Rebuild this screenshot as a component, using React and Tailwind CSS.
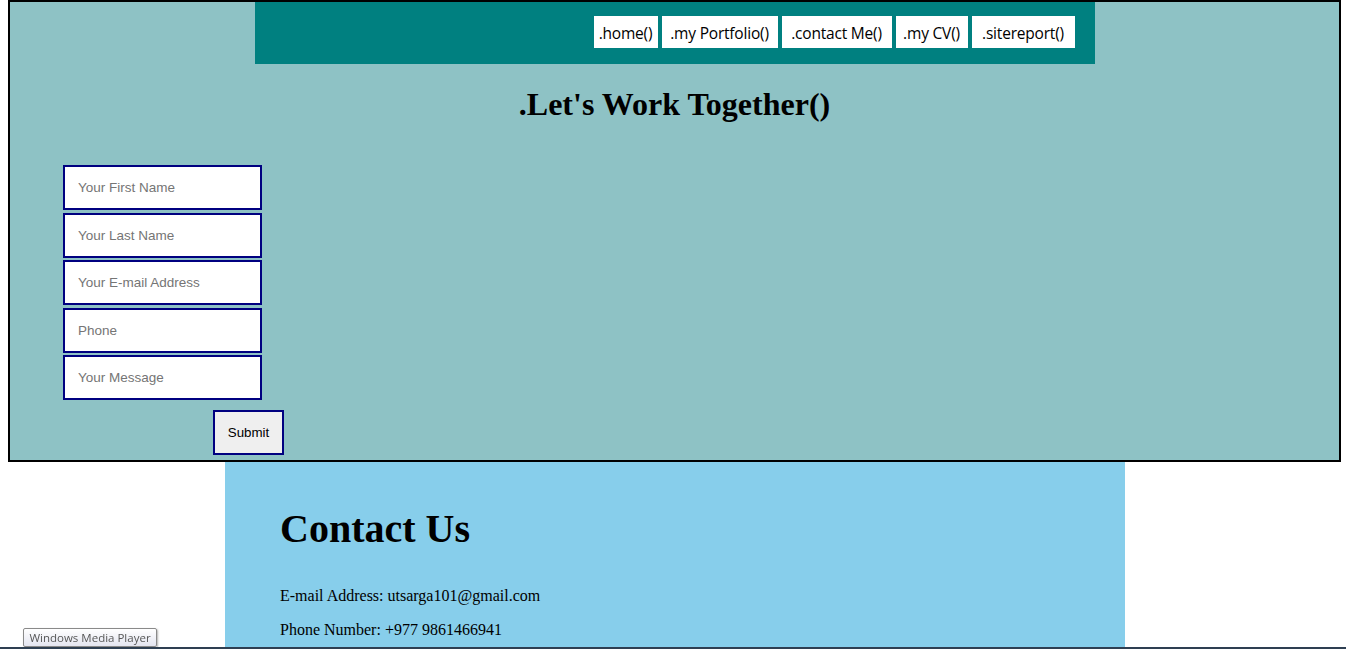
const navItems = [
  { label: '.home()', w: 'w-[64px]' },
  { label: '.my Portfolio()', w: 'w-[116px]' },
  { label: '.contact Me()', w: 'w-[110px]' },
  { label: '.my CV()', w: 'w-[72px]' },
  { label: '.sitereport()', w: 'w-[103px]' },
];

const fields = ['Your First Name', 'Your Last Name', 'Your E-mail Address', 'Phone', 'Your Message'];

function NavBar() {
  return (
    <nav className="mx-auto w-[840px] h-[62px] bg-[#008080] flex justify-end items-start pt-[14px] pr-[20px] gap-[4px]">
      {navItems.map((item) => (
        <a
          key={item.label}
          href="#"
          className={`${item.w} h-[32px] pt-[3px] bg-white text-black flex items-center justify-center text-[15.5px] whitespace-nowrap tracking-[-0.2px] font-['Comic_Sans_MS','Open_Sans',sans-serif]`}
        >
          {item.label}
        </a>
      ))}
    </nav>
  );
}

function ContactForm() {
  return (
    <form className="mt-[43px] ml-[53px] pb-[5px] w-[221px]" onSubmit={(e) => e.preventDefault()}>
      {fields.map((f) => (
        <input
          key={f}
          type="text"
          placeholder={f}
          className="block w-[199px] h-[45px] mb-[2.5px] border-2 border-[#000080] bg-white px-[13px] text-[13.5px] text-black placeholder:text-[#757575] font-['Liberation_Sans',Arial,sans-serif] outline-none"
        />
      ))}
      <div className="flex justify-end pt-[7.5px]">
        <button
          type="submit"
          className="w-[71px] h-[45px] border-2 border-[#000080] bg-[#efefef] text-[13.33px] text-black font-['Liberation_Sans',Arial,sans-serif]"
        >
          Submit
        </button>
      </div>
    </form>
  );
}

export default function App() {
  return (
    <div className="relative min-h-[649px] bg-white font-['Liberation_Serif','Times_New_Roman',serif] text-black">
      {/* Work together box */}
      <section className="ml-[8px] w-[1333px] border-2 border-black bg-[#8ec2c5]">
        <NavBar />
        <h1 className="mt-[23px] text-center text-[32px] font-bold leading-[1.107]">.Let's Work Together()</h1>
        <ContactForm />
      </section>

      {/* Contact us */}
      <section className="ml-[225px] w-[900px] bg-[#87ceeb] pl-[55px] pt-[45px] pb-[24px]">
        <h2 className="text-[40px] font-bold leading-[1.107]">Contact Us</h2>
        <p className="mt-[35px] text-[16px] leading-[1.107]">E-mail Address: utsarga101@gmail.com</p>
        <p className="mt-[17px] text-[16px] leading-[1.107]">Phone Number: +977 9861466941</p>
      </section>

      {/* tooltip overlay */}
      <div className="fixed left-[23px] top-[628px] w-[134px] h-[19px] flex items-center justify-center border border-[#8a8a8a] rounded-[2px] bg-gradient-to-b from-white to-[#e4e5f0] text-[11.5px] text-[#575757] shadow-[1px_1px_2px_rgba(0,0,0,0.3)] whitespace-nowrap font-['Open_Sans','DejaVu_Sans',sans-serif]">
        Windows Media Player
      </div>
      <div className="fixed left-0 right-0 top-[647px] h-[2px] bg-[#2e3f52]" />
    </div>
  );
}
